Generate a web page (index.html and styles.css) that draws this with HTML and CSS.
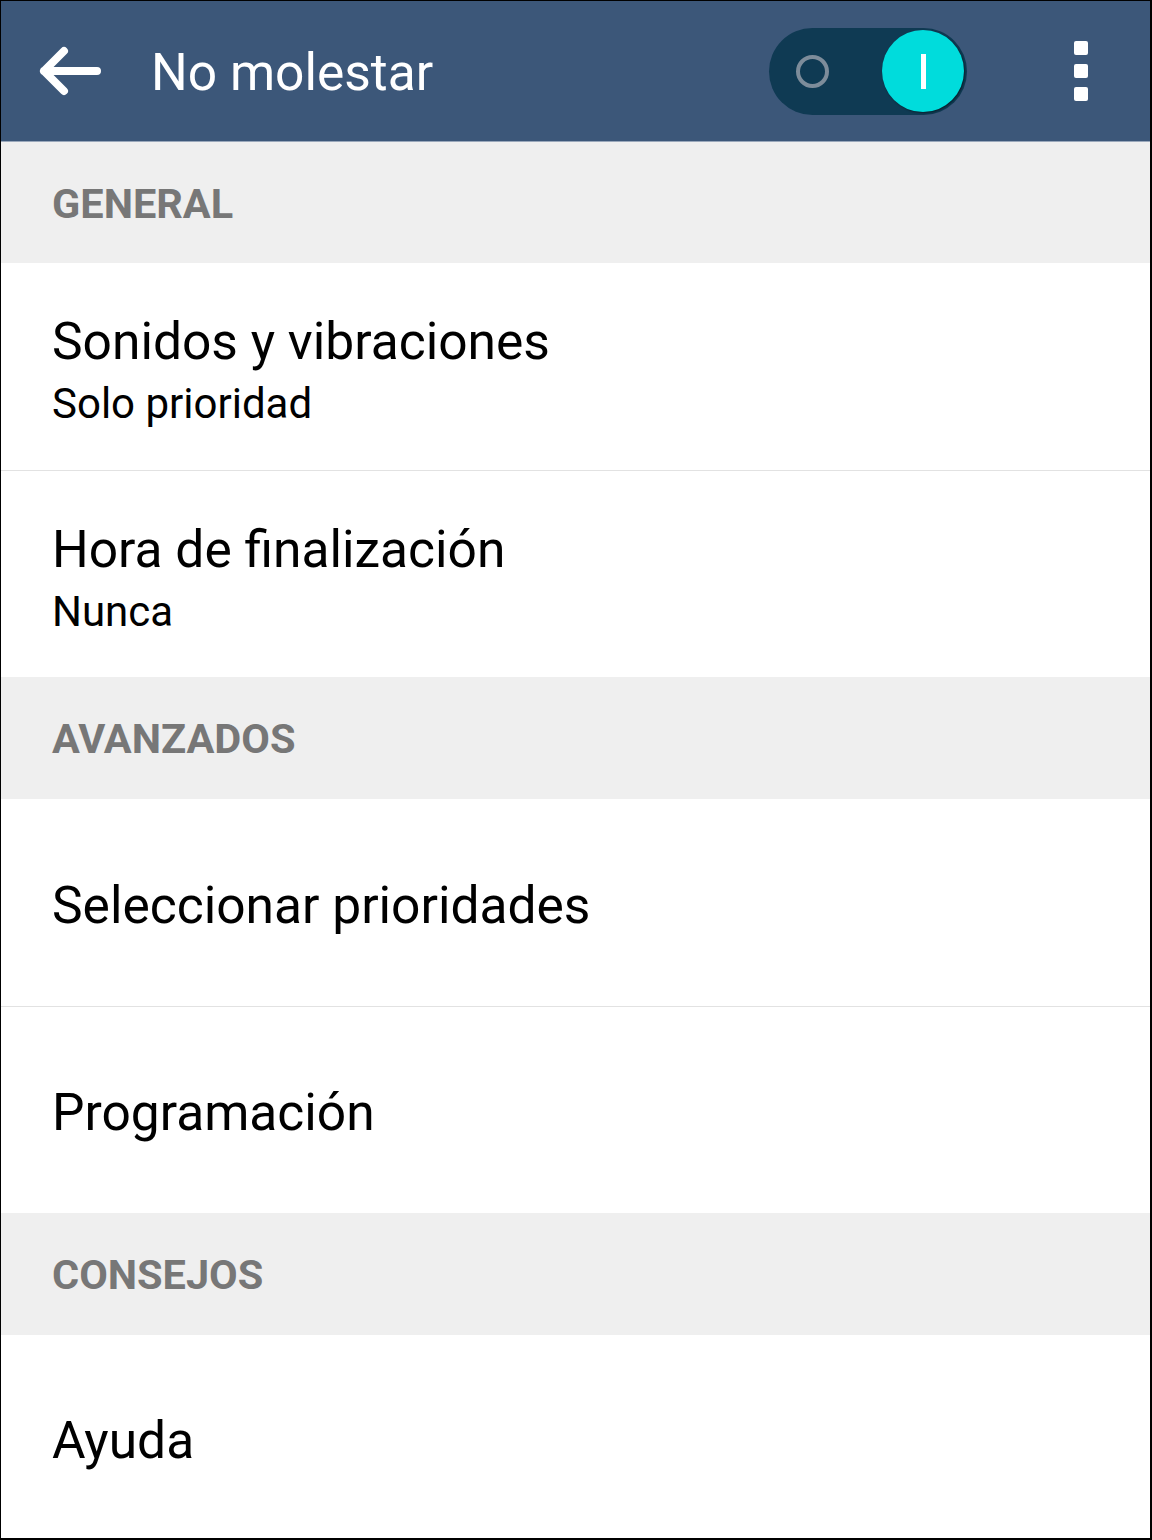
FILE: index.html
```html
<!DOCTYPE html>
<html lang="es">
<head>
<meta charset="utf-8">
<title>No molestar</title>
<link rel="stylesheet" href="styles.css">
</head>
<body>
<div class="frame">
  <header class="appbar">
    <svg class="back" width="70" height="60" viewBox="0 0 70 60" aria-hidden="true">
      <path d="M61 30H8M28 10L8 30L28 50" fill="none" stroke="#ffffff" stroke-width="8" stroke-linecap="round" stroke-linejoin="round"/>
    </svg>
    <h1 class="title">No molestar</h1>
    <div class="toggle">
      <span class="ring"></span>
      <span class="knob"><span class="bar"></span></span>
    </div>
    <div class="menu">
      <span class="dot"></span>
      <span class="dot"></span>
      <span class="dot"></span>
    </div>
  </header>

  <div class="section">GENERAL</div>
  <div class="item divided">
    <div class="text">
      <div class="item-title">Sonidos y vibraciones</div>
      <div class="item-sub">Solo prioridad</div>
    </div>
  </div>
  <div class="item">
    <div class="text">
      <div class="item-title">Hora de finalización</div>
      <div class="item-sub">Nunca</div>
    </div>
  </div>

  <div class="section">AVANZADOS</div>
  <div class="item single divided">
    <div class="item-title">Seleccionar prioridades</div>
  </div>
  <div class="item single">
    <div class="item-title">Programación</div>
  </div>

  <div class="section">CONSEJOS</div>
  <div class="item single">
    <div class="item-title">Ayuda</div>
  </div>
</div>
</body>
</html>
```

FILE: styles.css
```css
* {
  box-sizing: border-box;
}

html, body {
  margin: 0;
  padding: 0;
  background: #000000;
}

body {
  font-family: Roboto, "Noto Sans", "Liberation Sans", sans-serif;
}

.frame {
  width: 1152px;
  height: 1540px;
  border-style: solid;
  border-color: #000000;
  border-width: 1px 2px 2px 1px;
  background: #ffffff;
  overflow: hidden;
  display: flex;
  flex-direction: column;
}

.appbar {
  flex: none;
  height: 141px;
  background: #3c5779;
  border-bottom: 1px solid #9aa8bb;
  display: flex;
  align-items: center;
  padding-right: 62px;
}

.back {
  flex: none;
  margin-left: 35px;
  display: block;
}

.title {
  margin: 0 0 0 45px;
  padding-top: 4px;
  font-size: 51.5px;
  font-weight: 400;
  color: #ffffff;
  line-height: 60px;
}

.toggle {
  flex: none;
  margin-left: auto;
  width: 198px;
  height: 87px;
  border-radius: 44px;
  background: #0f3a53;
  display: flex;
  align-items: center;
  padding-left: 27px;
  padding-right: 3px;
}

.ring {
  width: 33px;
  height: 33px;
  border-radius: 50%;
  border: 4px solid #7d8c9a;
}

.knob {
  margin-left: auto;
  width: 82px;
  height: 82px;
  border-radius: 50%;
  background: #00dcdc;
  box-shadow: 1px 1px 2px rgba(0, 0, 0, 0.45);
  display: flex;
  align-items: center;
  justify-content: center;
}

.bar {
  width: 5px;
  height: 35px;
  background: #ffffff;
}

.menu {
  flex: none;
  margin-left: 107px;
  display: flex;
  flex-direction: column;
  gap: 9px;
}

.dot {
  width: 14px;
  height: 14px;
  border-radius: 2px;
  background: #ffffff;
}

.section {
  flex: none;
  height: 122px;
  background: #efefef;
  display: flex;
  align-items: center;
  padding-left: 51px;
  padding-top: 2px;
  font-size: 41.5px;
  font-weight: 700;
  color: #777777;
  line-height: 50px;
}

.appbar + .section {
  height: 121px;
}

.item {
  flex: none;
  height: 206px;
  display: flex;
  align-items: center;
  padding-left: 51px;
  padding-top: 8px;
  background: #ffffff;
}

.item.divided {
  height: 208px;
  border-bottom: 1px solid #e2e2e2;
}

.item.single {
  padding-top: 6px;
}

.item-title {
  font-size: 51.5px;
  line-height: 60px;
  color: #000000;
}

.item-sub {
  margin-top: 7px;
  font-size: 42px;
  line-height: 50px;
  color: #000000;
}
```
